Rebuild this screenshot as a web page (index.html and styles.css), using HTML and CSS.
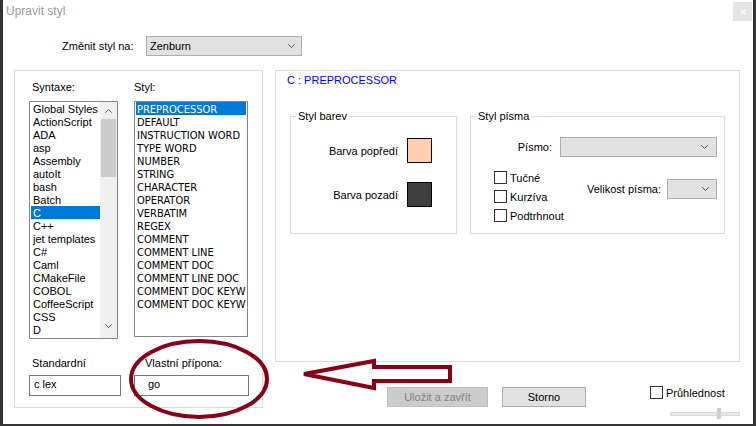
FILE: index.html
```html
<!DOCTYPE html>
<html lang="cs">
<head>
<meta charset="utf-8">
<title>Upravit styl</title>
<link rel="stylesheet" href="styles.css">
</head>
<body>
<div class="window">
  <div class="titlebar">
    <span class="title">Upravit styl</span>
    <div class="close"><svg width="6" height="6" viewBox="0 0 6 6"><path d="M0.8 0.8L5.2 5.2M5.2 0.8L0.8 5.2" stroke="#fafafa" stroke-width="1.5"/></svg></div>
  </div>

  <div class="theme-row">
    <span class="theme-lbl">Změnit styl na:</span>
    <div class="combo combo-theme"><span>Zenburn</span><svg class="chev" width="7" height="4" viewBox="0 0 7 4"><polyline points="0.3,0.3 3.5,3.5 6.7,0.3" fill="none" stroke="#555" stroke-width="1"/></svg></div>
  </div>

  <div class="main">
    <div class="left-box">
      <div class="col col-syntax">
        <div class="lbl pad3">Syntaxe:</div>
        <div class="listbox lb-syntax">
          <div class="items">
            <div class="item">Global Styles</div>
            <div class="item">ActionScript</div>
            <div class="item">ADA</div>
            <div class="item">asp</div>
            <div class="item">Assembly</div>
            <div class="item">autoIt</div>
            <div class="item">bash</div>
            <div class="item">Batch</div>
            <div class="item sel">C</div>
            <div class="item">C++</div>
            <div class="item">jet templates</div>
            <div class="item">C#</div>
            <div class="item">Caml</div>
            <div class="item">CMakeFile</div>
            <div class="item">COBOL</div>
            <div class="item">CoffeeScript</div>
            <div class="item">CSS</div>
            <div class="item">D</div>
          </div>
          <div class="scrollbar">
            <div class="sb-btn"><svg width="7" height="4" viewBox="0 0 7 4"><polyline points="0.3,3.7 3.5,0.5 6.7,3.7" fill="none" stroke="#606060" stroke-width="1"/></svg></div>
            <div class="sb-track"><div class="sb-thumb"></div></div>
            <div class="sb-btn sb-down"><svg width="7" height="4" viewBox="0 0 7 4"><polyline points="0.3,0.3 3.5,3.5 6.7,0.3" fill="none" stroke="#606060" stroke-width="1"/></svg></div>
          </div>
        </div>
        <div class="lbl pad3 lbl-bottom">Standardní</div>
        <div class="textbox tb-std">c lex</div>
      </div>
      <div class="col col-style">
        <div class="lbl">Styl:</div>
        <div class="listbox lb-style">
          <div class="items items-style">
            <div class="sitem sel">PREPROCESSOR</div>
            <div class="sitem">DEFAULT</div>
            <div class="sitem">INSTRUCTION WORD</div>
            <div class="sitem">TYPE WORD</div>
            <div class="sitem">NUMBER</div>
            <div class="sitem">STRING</div>
            <div class="sitem">CHARACTER</div>
            <div class="sitem">OPERATOR</div>
            <div class="sitem">VERBATIM</div>
            <div class="sitem">REGEX</div>
            <div class="sitem">COMMENT</div>
            <div class="sitem">COMMENT LINE</div>
            <div class="sitem">COMMENT DOC</div>
            <div class="sitem">COMMENT LINE DOC</div>
            <div class="sitem">COMMENT DOC KEYWORD</div>
            <div class="sitem">COMMENT DOC KEYWORD ERROR</div>
          </div>
        </div>
        <div class="lbl lbl-bottom2">Vlastní přípona:</div>
        <div class="textbox tb-ext">go</div>
      </div>
    </div>

    <div class="right-col">
      <div class="right-box">
        <div class="style-title">C : PREPROCESSOR</div>
        <div class="groups">
          <div class="group g-colors">
            <div class="legend">Styl barev</div>
            <div class="color-row first"><span>Barva popředí</span><div class="swatch sw-fg"></div></div>
            <div class="color-row"><span>Barva pozadí</span><div class="swatch sw-bg"></div></div>
          </div>
          <div class="group g-font">
            <div class="legend">Styl písma</div>
            <div class="font-row"><span>Písmo:</span><div class="combo combo-font"><span></span><svg class="chev" width="7" height="4" viewBox="0 0 7 4"><polyline points="0.3,0.3 3.5,3.5 6.7,0.3" fill="none" stroke="#555" stroke-width="1"/></svg></div></div>
            <div class="font-row2">
              <div class="checks">
                <div class="check-row"><span class="box"></span><span>Tučné</span></div>
                <div class="check-row"><span class="box"></span><span>Kurzíva</span></div>
                <div class="check-row"><span class="box"></span><span>Podtrhnout</span></div>
              </div>
              <div class="size"><span>Velikost písma:</span><div class="combo combo-size"><span></span><svg class="chev" width="7" height="4" viewBox="0 0 7 4"><polyline points="0.3,0.3 3.5,3.5 6.7,0.3" fill="none" stroke="#555" stroke-width="1"/></svg></div></div>
            </div>
          </div>
        </div>
      </div>
      <div class="bottom-row">
        <div class="btn btn-save">Uložit a zavřít</div>
        <div class="btn btn-cancel">Storno</div>
        <div class="transp">
          <div class="check-row tp"><span class="box"></span><span>Průhlednost</span></div>
          <div class="slider"><div class="track"></div><div class="thumb"></div></div>
        </div>
      </div>
    </div>
  </div>
</div>

<svg class="annot" width="756" height="426" viewBox="0 0 756 426">
  <ellipse cx="199" cy="379" rx="68" ry="38" fill="none" stroke="#870016" stroke-width="4"/>
  <polygon points="304,374 374,361 374,367 450,367 450,381 374,381 374,388" fill="none" stroke="#870016" stroke-width="4" stroke-linejoin="miter"/>
</svg>
</body>
</html>
```

FILE: styles.css
```css
html, body {
  margin: 0;
  padding: 0;
}
body {
  width: 756px;
  height: 426px;
  background: #333333;
  overflow: hidden;
}
.window {
  margin-left: 3px;
  width: 750px;
  height: 424px;
  background: #ffffff;
  font-family: "Liberation Sans", Arial, sans-serif;
  font-size: 11px;
  line-height: 14px;
  color: #000;
}
.titlebar {
  display: flex;
  align-items: flex-start;
  height: 22px;
}
.title {
  font-size: 12px;
  line-height: 15px;
  color: #9a9a9a;
  margin: 4px 0 0 3px;
}
.close {
  margin: 2px 1px 0 auto;
  width: 19px;
  height: 19px;
  background: #e5e5e5;
  display: flex;
  align-items: center;
  justify-content: center;
}
.theme-row {
  display: flex;
  align-items: center;
  height: 20px;
  margin-top: 14px;
  padding-left: 59px;
}
.theme-lbl {
  width: 84px;
}
.combo {
  box-sizing: border-box;
  height: 20px;
  background: #e1e1e1;
  border: 1px solid #adadad;
  display: flex;
  align-items: center;
  justify-content: space-between;
  padding: 0 6px 0 3px;
  line-height: 18px;
}
.combo-theme { width: 156px; }
.combo-font { width: 157px; padding-right: 8px; }
.combo-size { width: 50px; padding-right: 7px; }
.chev { display: block; }

.main {
  display: flex;
  margin-top: 14px;
  padding-left: 11px;
}
.left-box {
  box-sizing: border-box;
  width: 249px;
  height: 338px;
  border: 1px solid #dcdcdc;
  display: flex;
  padding: 9px 0 0 14px;
}
.col-syntax { width: 105px; }
.lbl { line-height: 14px; }
.pad3 { padding-left: 3px; }
.listbox {
  box-sizing: border-box;
  border: 1px solid #828790;
  background: #fff;
  display: flex;
  margin-top: 7px;
}
.lb-syntax { width: 89px; height: 238px; }
.lb-style { width: 114px; height: 236px; }
.items {
  flex: 1;
  min-width: 0;
  padding-left: 1px;
  overflow: hidden;
}
.item {
  height: 13px;
  line-height: 15px;
  padding-left: 2px;
  white-space: nowrap;
}
.items-style { padding-right: 1px; }
.sitem {
  height: 13px;
  line-height: 15px;
  padding-left: 1px;
  white-space: nowrap;
  overflow: hidden;
  font-family: "DejaVu Sans Condensed", "DejaVu Sans", sans-serif;
  font-stretch: condensed;
  font-size: 11px;
}
.sel {
  background: #0078d7;
  color: #ffffff;
}
.scrollbar {
  width: 17px;
  background: #f0f0f0;
  display: flex;
  flex-direction: column;
}
.sb-btn {
  height: 17px;
  display: flex;
  align-items: center;
  justify-content: center;
}
.sb-down { padding-bottom: 4px; }
.sb-track { flex: 1; }
.sb-thumb {
  margin-left: 1px;
  width: 15px;
  height: 58px;
  background: #cdcdcd;
}
.lbl-bottom { margin-top: 17px; }
.lbl-bottom2 { margin-top: 19px; padding-left: 11px; }
.textbox {
  box-sizing: border-box;
  margin-top: 5px;
  height: 21px;
  border: 1px solid #7a7a7a;
  line-height: 17px;
  padding-left: 4px;
  background: #fff;
}
.tb-std { width: 92px; }
.tb-ext { width: 115px; padding-left: 13px; }

.right-col {
  width: 465px;
  margin-left: 12px;
}
.right-box {
  box-sizing: border-box;
  width: 465px;
  height: 292px;
  border: 1px solid #dcdcdc;
  padding: 2px 0 0 11px;
}
.style-title {
  color: #0000ff;
  line-height: 14px;
}
.groups {
  display: flex;
  margin-top: 29px;
  padding-left: 3px;
}
.group {
  box-sizing: border-box;
  height: 118px;
  border: 1px solid #dcdcdc;
}
.legend {
  width: fit-content;
  margin: -8px 0 0 5px;
  padding: 0 2px;
  background: #fff;
  line-height: 14px;
}
.g-colors {
  width: 167px;
  padding-right: 24px;
}
.g-font {
  width: 255px;
  margin-left: 13px;
  padding-right: 7px;
}
.color-row {
  display: flex;
  justify-content: flex-end;
  align-items: center;
  gap: 9px;
  margin-top: 19px;
}
.color-row.first { margin-top: 15px; }
.swatch {
  box-sizing: border-box;
  width: 25px;
  height: 25px;
  border: 1px solid #000;
}
.sw-fg { background: #ffcfaf; }
.sw-bg { background: #3f3f3f; }
.font-row {
  display: flex;
  justify-content: flex-end;
  align-items: center;
  gap: 8px;
  margin-top: 14px;
}
.font-row2 {
  display: flex;
  align-items: flex-start;
  margin-top: 11px;
  padding-left: 23px;
}
.check-row {
  display: flex;
  align-items: center;
  height: 19px;
}
.box {
  box-sizing: border-box;
  width: 13px;
  height: 13px;
  border: 1px solid #333;
  background: #fff;
  margin-right: 3px;
}
.size {
  margin-left: auto;
  margin-top: 11px;
  display: flex;
  align-items: center;
  gap: 6px;
}

.bottom-row {
  display: flex;
  align-items: flex-start;
  margin-top: 25px;
  padding-left: 112px;
}
.btn {
  box-sizing: border-box;
  height: 20px;
  border: 1px solid #adadad;
  background: #e1e1e1;
  line-height: 18px;
  text-align: center;
}
.btn-save {
  width: 101px;
  background: #cccccc;
  border-color: #bfbfbf;
  color: #838383;
}
.btn-cancel {
  width: 84px;
  margin-left: 14px;
}
.transp {
  width: 90px;
  margin-left: 64px;
  margin-top: -1px;
}
.check-row.tp {
  height: 14px;
  align-items: flex-start;
}
.slider {
  position: relative;
  display: flex;
  align-items: center;
  margin: 8px 0 0 20px;
  width: 70px;
  height: 11px;
}
.track {
  box-sizing: border-box;
  width: 100%;
  height: 4px;
  background: #e7e7e7;
  border: 1px solid #dadada;
}
.thumb {
  position: absolute;
  left: 47px;
  top: 0;
  width: 4px;
  height: 11px;
  background: #cdcdcd;
}
.annot {
  position: absolute;
  left: 0;
  top: 0;
  pointer-events: none;
}
```
